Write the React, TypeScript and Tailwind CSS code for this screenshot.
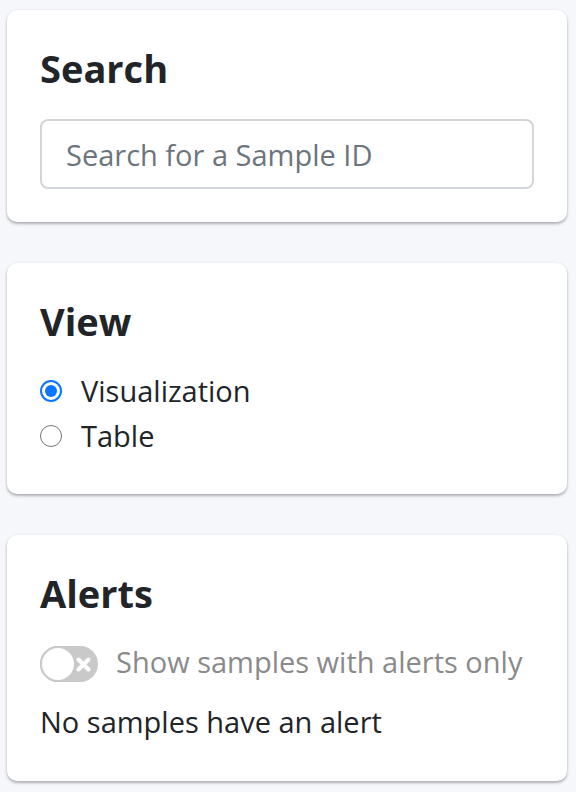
import React from "react";

function Card({ children, className = "" }: { children: React.ReactNode; className?: string }) {
  return (
    <div
      className={
        "ml-[7px] w-[560px] rounded-[10px] bg-white px-[33px] shadow-[0_2px_3px_rgba(0,0,0,0.28),0_0_3px_rgba(0,0,0,0.06)] " +
        className
      }
    >
      {children}
    </div>
  );
}

function Title({ children }: { children: React.ReactNode }) {
  return <h2 className="text-[38px] font-bold leading-[44px] text-[#212529]">{children}</h2>;
}

export default function App() {
  return (
    <div
      className="min-h-[792px] w-[576px] bg-[#f6f7fb] pt-[10px]"
      style={{ fontFamily: '"Open Sans", "Noto Sans", sans-serif' }}
    >
      <Card className="pt-[36px] pb-[33px]">
        <Title>Search</Title>
        <input
          type="text"
          placeholder="Search for a Sample ID"
          className="mt-[29px] block h-[70px] w-full rounded-[8px] border-2 border-[#d2d6da] bg-white px-[24px] text-[29px] text-[#212529] outline-none placeholder:text-[#6c757d]"
        />
      </Card>

      <Card className="mt-[41px] pt-[36px] pb-[36px]">
        <Title>View</Title>
        <div className="mt-[25px] flex flex-col text-[29px] leading-[45px] text-[#212529]">
          <label className="flex items-center">
            <span className="flex h-[22px] w-[22px] items-center justify-center rounded-full border-2 border-[#0b76ff] bg-white">
              <span className="h-[12px] w-[12px] rounded-full bg-[#0b76ff]" />
            </span>
            <span className="ml-[19px]">Visualization</span>
          </label>
          <label className="flex items-center">
            <span className="h-[22px] w-[22px] rounded-full border-[1.5px] border-[#767676] bg-white" />
            <span className="ml-[19px]">Table</span>
          </label>
        </div>
      </Card>

      <Card className="mt-[41px] pt-[36px] pb-[37px]">
        <Title>Alerts</Title>
        <div className="mt-[24px] flex items-center text-[29px] leading-[45px]">
          <span className="relative mt-[4px] inline-block h-[36px] w-[58px] shrink-0 rounded-full bg-[#c9c9c9]">
            <span className="absolute left-0 top-0 h-[36px] w-[36px] rounded-full border-2 border-[#c9c9c9] bg-white" />
            <svg
              className="absolute right-[7px] top-[11px]"
              width="15"
              height="15"
              viewBox="0 0 15 15"
            >
              <path d="M2.5 2.5 L12.5 12.5 M12.5 2.5 L2.5 12.5" stroke="white" strokeWidth="4" strokeLinecap="round" />
            </svg>
          </span>
          <span className="ml-[18px] text-[#8a8a8a]">Show samples with alerts only</span>
        </div>
        <p className="mt-[15px] text-[29px] leading-[45px] text-[#212529]">No samples have an alert</p>
      </Card>
    </div>
  );
}
